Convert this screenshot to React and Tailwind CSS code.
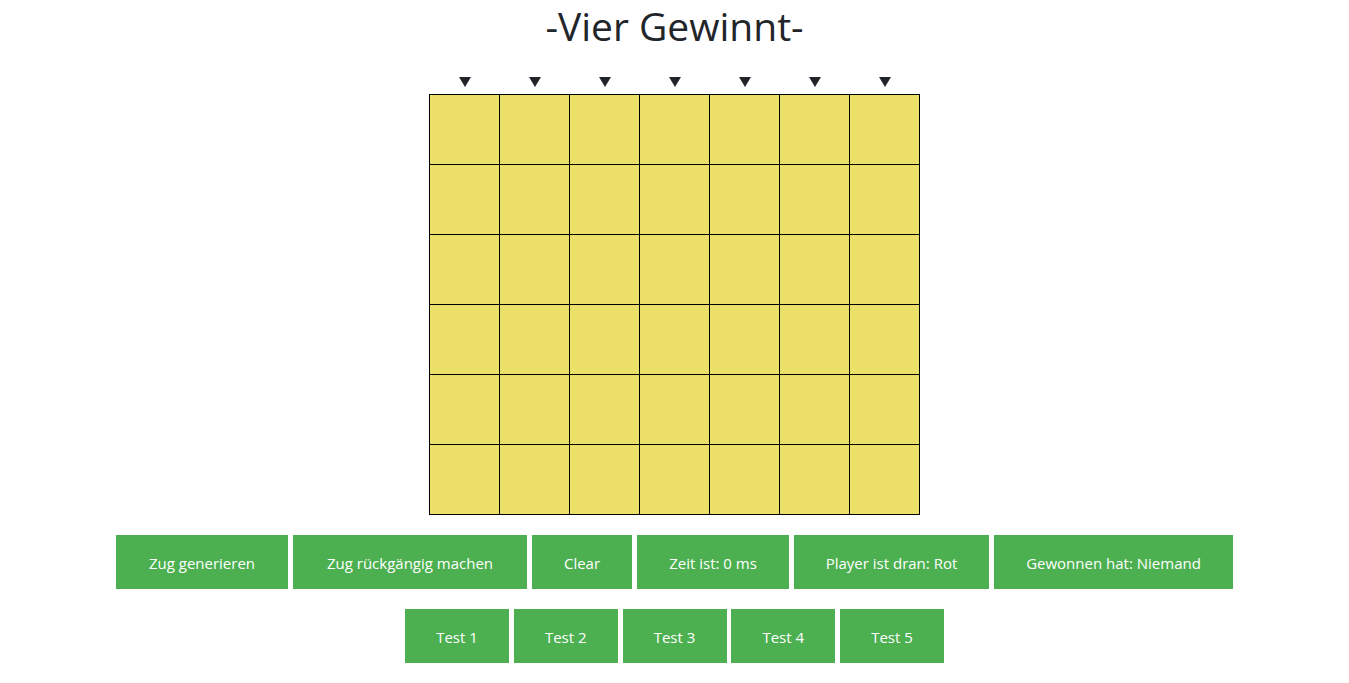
import React from 'react';

const COLS = 7;
const ROWS = 6;

const mainButtons = [
  { label: 'Zug generieren', w: 'w-[172px]' },
  { label: 'Zug rückgängig machen', w: 'w-[234px]' },
  { label: 'Clear', w: 'w-[100px]' },
  { label: 'Zeit ist: 0 ms', w: 'w-[152px]' },
  { label: 'Player ist dran: Rot', w: 'w-[195px]' },
  { label: 'Gewonnen hat: Niemand', w: 'w-[239px]' },
];

const tests = ['Test 1', 'Test 2', 'Test 3', 'Test 4', 'Test 5'];

function Arrow() {
  return (
    <svg width="12" height="10" viewBox="0 0 12 10">
      <polygon points="0,0 12,0 6,10" fill="#212529" />
    </svg>
  );
}

export default function App() {
  return (
    <div className="min-h-screen bg-white font-['Open_Sans','Noto_Sans',sans-serif] text-[#212529]">
      <div className="flex flex-col items-center">
        <h1 className="mt-[2px] text-[39px] leading-[48px] font-normal">-Vier Gewinnt-</h1>

        {/* column arrows */}
        <div className="mt-[27px] flex">
          {Array.from({ length: COLS }).map((_, i) => (
            <div key={i} className="w-[70px] h-[10px] flex justify-center first:ml-[1px]">
              <Arrow />
            </div>
          ))}
        </div>

        {/* board */}
        <div className="mt-[7px] grid grid-cols-7 border-l border-t border-black">
          {Array.from({ length: COLS * ROWS }).map((_, i) => (
            <div key={i} className="w-[70px] h-[70px] bg-[#ece06b] border-r border-b border-black"></div>
          ))}
        </div>

        <div className="mt-[20px] flex gap-[5px]">
          {mainButtons.map((b) => (
            <button key={b.label} className={`${b.w} h-[54px] pt-[2px] bg-[#4caf50] text-white text-[15px] flex items-center justify-center`}>
              {b.label}
            </button>
          ))}
        </div>

        <div className="mt-[20px] flex gap-[4.75px]">
          {tests.map((t) => (
            <button key={t} className="w-[104px] h-[54px] pt-[2px] bg-[#4caf50] text-white text-[15px] flex items-center justify-center">
              {t}
            </button>
          ))}
        </div>
      </div>
    </div>
  );
}
